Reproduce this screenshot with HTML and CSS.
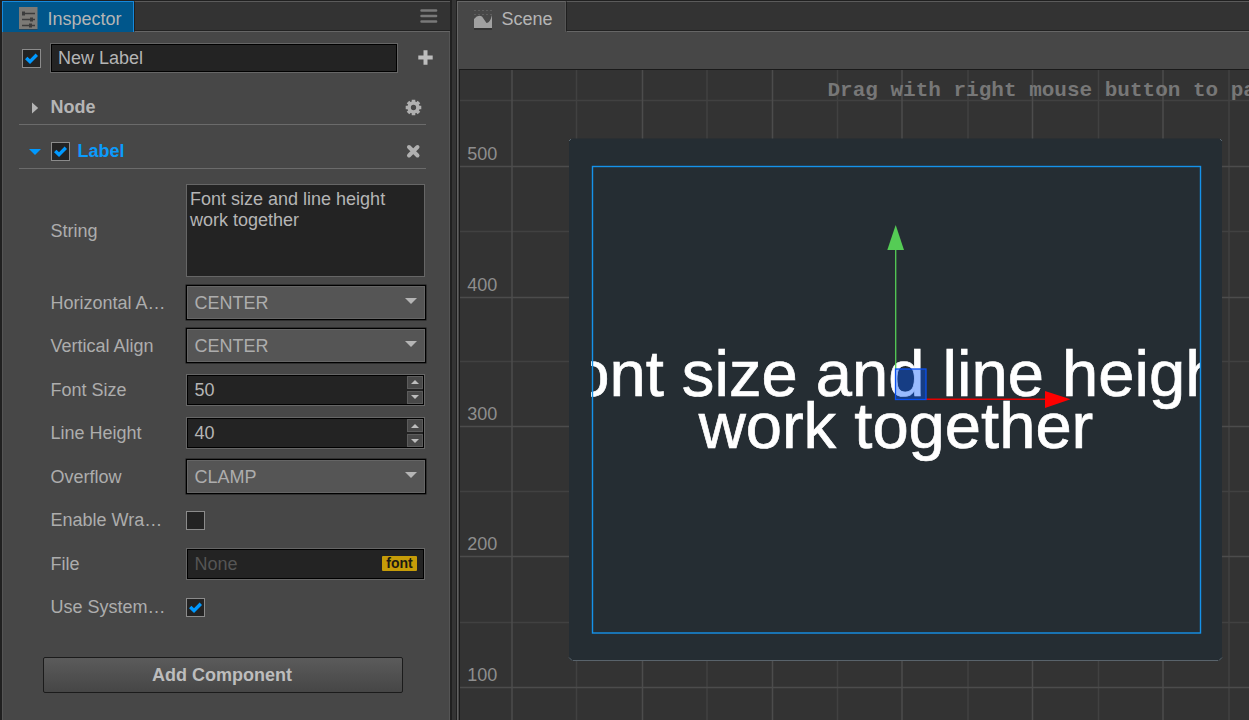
FILE: index.html
```html
<!DOCTYPE html>
<html lang="en">
<head>
<meta charset="utf-8">
<title>Editor</title>
<link rel="stylesheet" href="styles.css">
</head>
<body>
<svg class="defs" width="0" height="0">
  <symbol id="check" viewBox="0 0 17 17"><path d="M3.200 8 7 11.600 13.800 4.800" fill="none" stroke="#09f" stroke-width="3.400"/></symbol>
</svg>
<main class="editor">
  <section class="panel inspector">
    <header class="tabs">
      <div class="tab active">
        <svg class="inspector-icon" width="19" height="23" viewBox="0 0 19 23"><path d="M0 0h18.500v22H0z" fill="#7c7a76"/><path d="M0 22h18.500v1H0z" fill="#24455c"/><path d="M3 6.500h13M3 12.500h13M3 18.500h13" stroke="#3c3c3c" stroke-width="1.600"/><path d="M4.500 4.500v4M12.500 10.500v4M11.500 16.500v4" stroke="#3c3c3c" stroke-width="3"/></svg>
        <span>Inspector</span>
      </div>
      <div class="filler"><svg width="18" height="14" viewBox="0 0 18 14"><path d="M1.500 1.500h14.600M1.500 7h14.600M1.500 12.500h14.600" stroke="#797979" stroke-width="2.500" stroke-linecap="round"/></svg></div>
    </header>
    <div class="body">
      <div class="name-row">
        <span class="check"><svg><use href="#check"/></svg></span>
        <div class="input name">New Label</div>
        <svg class="plus" width="15" height="15" viewBox="0 0 15 15"><path d="M7.500 2.300v10.400M2.300 7.500h10.400" stroke="#bdbdbd" stroke-width="4" stroke-linecap="square"/></svg>
      </div>
      <div class="section node">
        <svg class="arrow" width="14" height="12" viewBox="0 0 14 12"><path d="M4 0.500 10.200 6 4 11.500z" fill="#b5b5b5"/></svg>
        <b>Node</b>
        <svg class="action" width="17" height="17" viewBox="0 0 17 17"><circle cx="8.500" cy="8.500" r="4.400" fill="none" stroke="#b0b0b0" stroke-width="3.500"/><g stroke="#b0b0b0" stroke-width="3.600"><path d="M8.500.7v3M8.500 13.300v3M.7 8.500h3M13.300 8.500h3M3 3l2.100 2.100M11.900 11.900 14 14M14 3l-2.100 2.100M5.100 11.900 3 14"/></g></svg>
      </div>
      <div class="section component">
        <svg class="arrow" width="14" height="12" viewBox="0 0 14 12"><path d="M1 3h12L7 9z" fill="#09f"/></svg>
        <span class="check"><svg><use href="#check"/></svg></span>
        <b>Label</b>
        <svg class="action" width="17" height="17" viewBox="0 0 17 17"><path d="M4 4l8.500 8.500M12.500 4 4 12.500" stroke="#b0b0b0" stroke-width="4" stroke-linecap="round"/></svg>
      </div>
      <div class="props">
        <label>String</label>
        <div class="textarea">Font size and line height<br>work together</div>
        <label>Horizontal A…</label>
        <div class="select">CENTER<i></i></div>
        <label>Vertical Align</label>
        <div class="select">CENTER<i></i></div>
        <label>Font Size</label>
        <div class="input number">50<span class="spin"><i class="up"></i><i class="down"></i></span></div>
        <label>Line Height</label>
        <div class="input number">40<span class="spin"><i class="up"></i><i class="down"></i></span></div>
        <label>Overflow</label>
        <div class="select">CLAMP<i></i></div>
        <label>Enable Wra…</label>
        <span class="check"></span>
        <label>File</label>
        <div class="input file"><span>None</span><em>font</em></div>
        <label>Use System…</label>
        <span class="check"><svg><use href="#check"/></svg></span>
      </div>
      <button class="add">Add Component</button>
    </div>
  </section>
  <section class="panel scene">
    <header class="tabs">
      <div class="tab">
        <svg class="scene-icon" width="19" height="24" viewBox="0 0 19 24"><path d="M0 3.500h18M0 7.500h18" stroke="#5d5d5d" stroke-dasharray="2 2"/><path d="M0 12Q4 7 8 9.500L12.500 16Q16 16 18 8V21H0z" fill="#a0a0a0"/><path d="M0 22h18" stroke="#333" stroke-width="2"/></svg>
        <span>Scene</span>
      </div>
      <div class="filler"></div>
    </header>
    <div class="toolbar"></div>
    <svg class="view" viewBox="460 70 789 650" width="789" height="650">
      <g class="minor"><path d="M576.500 70V720M707 70V720M837.500 70V720M968 70V720M1098.500 70V720M1229 70V720M460 100.500H1249M460 231.500H1249M460 361.500H1249M460 491.500H1249M460 622.500H1249"/></g>
      <g class="major"><path d="M512 70V720M642.500 70V720M772.500 70V720M902 70V720M1032.500 70V720M1163 70V720M460 166.500H1249M460 297.500H1249M460 426.500H1249M460 556.500H1249M460 687.500H1249"/></g>
      <g class="ruler"><text x="467.300" y="160">500</text><text x="467.300" y="291">400</text><text x="467.300" y="420">300</text><text x="467.300" y="550">200</text><text x="467.300" y="681">100</text></g>
      <text class="hint" x="827.500" y="96">Drag with right mouse button to pa</text>
      <rect x="569" y="138.500" width="653" height="522" rx="4" fill="#252d33"/>
      <path d="M573 660.500H1218" stroke="#59636b"/>
      <path d="M569 657.500l3 3M1219 660.500l3-3M569 141l2-2M1220 139l2 2" stroke="#59666f"/>
      <clipPath id="bounds"><rect x="591" y="167" width="609" height="466"/></clipPath>
      <g class="label" clip-path="url(#bounds)"><text x="886.500" y="396">Font size and line height</text><text x="896" y="448">work together</text></g>
      <rect x="592.500" y="166.500" width="608" height="466.500" fill="none" stroke="#1592ea" stroke-width="1.400"/>
      <path d="M895.700 370V248" stroke="#5c5" stroke-width="1.300"/><path d="M895.700 225 904 250H887.300z" fill="#5c5"/>
      <path d="M926 399.300H1046" stroke="#e60000" stroke-width="1.500"/><path d="M1070.500 399.300 1045 391v17z" fill="red"/>
      <rect x="895.500" y="369" width="30.500" height="30.500" fill="#05f" fill-opacity=".4" stroke="#0a50f0" stroke-width="1.300"/>
    </svg>
  </section>
</main>
</body>
</html>
```
FILE: styles.css
```css
* { box-sizing: border-box; }
body {
  margin: 0;
  background: #343434;
  color: #b5b5b5;
  font: 18px/21px "Liberation Sans", Arial, sans-serif;
  overflow: hidden;
}
.defs { position: absolute; }
.editor { display: flex; gap: 4px; height: 720px; }
.panel {
  background: #474747;
  border: solid #202020;
  border-width: 1px 2px 0;
  display: flex;
  flex-direction: column;
}
.inspector { width: 452px; }
.scene { width: 793px; border-width: 1px 0 0 1px; }
.tabs { display: flex; height: 31px; flex: none; }
.tab {
  display: flex;
  align-items: flex-start;
  border: 1px solid #666;
  border-bottom: 0;
}
.tab span { padding-top: 7px; }
.tab.active {
  width: 132px;
  background: #00568b;
  border-color: #1689dc;
}
.inspector-icon { margin: 5px 9.5px 0 16px; }
.filler {
  flex: 1;
  background: #333;
  border: solid;
  border-width: 1px 0 1px 1px;
  border-color: #5b5b5b #555 #666 #1f1f1f;
  box-shadow: inset 0 -1px #222;
  display: flex;
  justify-content: flex-end;
  padding: 7px 12px 0 0;
}
.body {
  flex: 1;
  padding: 11px 23px 0 16px;
  border: 1px solid #555;
  border-width: 0 1px;
}
.name-row { display: flex; align-items: center; height: 30px; padding-left: 3px; }
.check {
  width: 19px;
  height: 19px;
  background: #232323;
  border: 1px solid #8b8b8b;
  flex: none;
}
.name-row .check { margin-top: 1px; }
.check svg { display: block; width: 17px; height: 17px; }
.input {
  height: 32px;
  background: #232323;
  border: 1px solid #666;
  box-shadow: inset 0 0 0 1px #000;
  padding: 5px 0 0 7.5px;
}
.name { width: 348px; height: 30px; margin-left: 9px; padding: 4px 7px; flex: none; }
.plus { margin: -2px 0 0 20px; flex: none; }
.section {
  display: flex;
  align-items: center;
  border-bottom: 1px solid #6b6b6b;
  padding-left: 9px;
}
.node { height: 52px; padding-top: 18px; }
.node b { margin-left: 8.5px; }
.component { height: 44px; padding-top: 10px; color: #0b9bfb; }
.component .check { margin: 0 7.5px 0 9px; }
.action { margin: 0 4px 0 auto; }
.props {
  display: grid;
  grid-template-columns: 135px 240px;
  grid-template-rows: 112px repeat(8, 43.5px);
  align-items: center;
  padding-left: 32px;
}
.props label {
  white-space: nowrap;
  color: #adadad;
  padding-top: .7px;
  margin-left: -.5px;
}
.textarea {
  height: 93px;
  width: 239px;
  margin-top: 11px;
  background: #232323;
  border: 1px solid #666;
  padding: 4px 3px;
}
.props label:first-child { padding-top: 12px; }
.select {
  height: 35px;
  background: #555;
  border: 1px solid #000;
  box-shadow: inset 0 0 0 1px #656565, 0 0 0 .5px #181818;
  padding: 7px 8.5px 7px 7.5px;
  margin-bottom: .7px;
  display: flex;
  justify-content: space-between;
  color: #adadad;
}
.select i {
  border: solid transparent;
  border-width: 6px 6px 0;
  border-top-color: #b5b5b5;
  width: 0;
  height: 0;
  margin-top: 5px;
}
.number, .file { width: 239px; display: flex; justify-content: space-between; }
.spin {
  display: grid;
  gap: 2px;
  grid-template-rows: 13px 13px;
  margin: -4px 1px 0 0;
}
.spin i {
  width: 16px;
  background: #484848;
  border: 1px solid #5c5c5c;
  display: flex;
  align-items: center;
  justify-content: center;
}
.spin i::before { content: ""; border: 4px solid transparent; }
.spin .up::before { border-top: 0; border-bottom-color: #bdbdbd; }
.spin .down::before { border-bottom: 0; border-top-color: #bdbdbd; }
.file span { color: #555; }
.file em {
  background: #c69c08;
  color: #1c1a12;
  font: bold 14px/14px "Liberation Sans", Arial, sans-serif;
  width: 35px;
  height: 15px;
  border-radius: 1px;
  text-align: center;
  margin: 2px 7px 0 0;
}
.add {
  display: block;
  width: 360px;
  height: 36px;
  margin: 28px 0 0 24px;
  padding: 0 2px 0 0;
  background: linear-gradient(#5b5b5b, #464646);
  border: 1px solid #1b1b1b;
  border-radius: 2px;
  color: #bdbdbd;
  font: bold 18px "Liberation Sans", Arial, sans-serif;
}
.scene .tab { width: 109px; border-right-color: #555; }
.scene-icon { margin: 5px 9px 0 15.5px; }
.toolbar { height: 37px; flex: none; border-left: 1px solid #666; }
.view {
  display: block;
  flex: none;
  width: 790px;
  height: 651px;
  margin-left: 2px;
  background: #333;
  border: solid #1a1a1a;
  border-width: 1px 0 0 1px;
  box-shadow: -1px 0 #474747, -2px 0 #606060;
}
.minor { stroke: #414141; stroke-width: 1.5; }
.major { stroke: #4c4c4c; stroke-width: 1.5; }
.ruler { fill: #8e8e8e; }
.hint { font: bold 21px "Liberation Mono", "Courier New", monospace; fill: #777; }
.label {
  font-size: 65.15px;
  fill: #fff;
  stroke: #fff;
  stroke-width: .7;
  text-anchor: middle;
}
```
